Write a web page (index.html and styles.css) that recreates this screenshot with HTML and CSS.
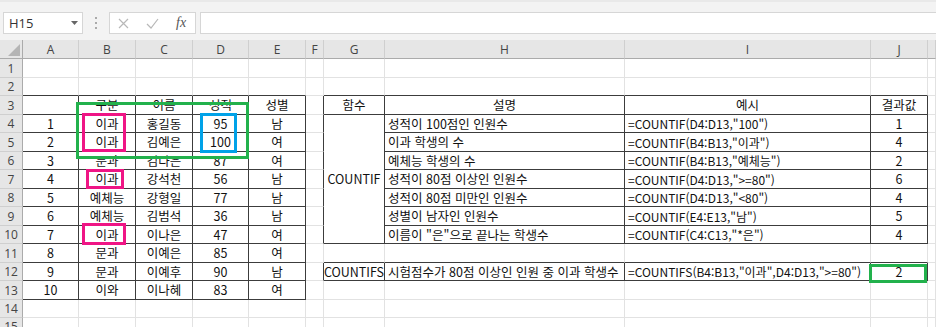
FILE: index.html
```html
<!DOCTYPE html>
<html lang="ko">
<head>
  <meta charset="UTF-8" />
  <title>COUNTIF / COUNTIFS</title>
  <link rel="stylesheet" href="styles.css">
</head>
<body>

  <!-- Formula bar -->
  <div class="toolbar">
    <div class="namebox">
      <span>H15</span>
      <svg class="caret" width="7" height="4" viewBox="0 0 7 4"><path d="M0 0h7L3.5 4z" fill="#666"/></svg>
    </div>
    <svg class="grip" width="3" height="12" viewBox="0 0 3 12">
      <rect x="0" y="0" width="2" height="2" fill="#aaa"/>
      <rect x="0" y="5" width="2" height="2" fill="#aaa"/>
      <rect x="0" y="10" width="2" height="2" fill="#aaa"/>
    </svg>
    <div class="fxbox">
      <svg width="11" height="11" viewBox="0 0 11 11"><path d="M1 1l9 9M10 1l-9 9" stroke="#b8b8b8" stroke-width="1.2" fill="none"/></svg>
      <svg width="13" height="11" viewBox="0 0 13 11"><path d="M1 6l4 4 7-9" stroke="#b8b8b8" stroke-width="1.2" fill="none"/></svg>
      <span class="fx">fx</span>
    </div>
    <div class="formula"></div>
  </div>

  <!-- Sheet -->
  <div class="sheet">
    <!-- column headers -->
    <div class="c corner"><svg width="12" height="12" viewBox="0 0 12 12"><path d="M12 0v12H0z" fill="#b5b5b5"/></svg></div>
    <div class="c hd">A</div><div class="c hd">B</div><div class="c hd">C</div><div class="c hd">D</div><div class="c hd">E</div>
    <div class="c hd">F</div><div class="c hd">G</div><div class="c hd">H</div><div class="c hd">I</div><div class="c hd">J</div><div class="c hd"></div>

    <!-- row 1 -->
    <div class="c rh">1</div>
    <div class="c"></div><div class="c"></div><div class="c"></div><div class="c"></div><div class="c"></div>
    <div class="c"></div><div class="c"></div><div class="c"></div><div class="c"></div><div class="c"></div><div class="c"></div>

    <!-- row 2 -->
    <div class="c rh">2</div>
    <div class="c tb"></div><div class="c tb"></div><div class="c tb"></div><div class="c tb"></div><div class="c tb"></div>
    <div class="c"></div><div class="c tb"></div><div class="c tb"></div><div class="c tb"></div><div class="c tb"></div><div class="c"></div>

    <!-- row 3 -->
    <div class="c rh">3</div>
    <div class="c t"></div><div class="c t">구분</div><div class="c t">이름</div><div class="c t">성적</div><div class="c t">성별</div>
    <div class="c tr"></div><div class="c t">함수</div><div class="c t">설명</div><div class="c t">예시</div><div class="c t">결과값</div><div class="c"></div>

    <!-- row 4 -->
    <div class="c rh">4</div>
    <div class="c t">1</div><div class="c t">이과</div><div class="c t">홍길동</div><div class="c t">95</div><div class="c t">남</div>
    <div class="c tr"></div><div class="c t merged">COUNTIF</div>
    <div class="c t l">성적이 100점인 인원수</div><div class="c t l f">=COUNTIF(D4:D13,"100")</div><div class="c t">1</div><div class="c"></div>

    <!-- row 5 -->
    <div class="c rh">5</div>
    <div class="c t">2</div><div class="c t">이과</div><div class="c t">김예은</div><div class="c t">100</div><div class="c t">여</div>
    <div class="c tr"></div>
    <div class="c t l">이과 학생의 수</div><div class="c t l f">=COUNTIF(B4:B13,"이과")</div><div class="c t">4</div><div class="c"></div>

    <!-- row 6 -->
    <div class="c rh">6</div>
    <div class="c t">3</div><div class="c t">문과</div><div class="c t">김다은</div><div class="c t">87</div><div class="c t">여</div>
    <div class="c tr"></div>
    <div class="c t l">예체능 학생의 수</div><div class="c t l f">=COUNTIF(B4:B13,"예체능")</div><div class="c t">2</div><div class="c"></div>

    <!-- row 7 -->
    <div class="c rh">7</div>
    <div class="c t">4</div><div class="c t">이과</div><div class="c t">강석천</div><div class="c t">56</div><div class="c t">남</div>
    <div class="c tr"></div>
    <div class="c t l">성적이 80점 이상인 인원수</div><div class="c t l f">=COUNTIF(D4:D13,"&gt;=80")</div><div class="c t">6</div><div class="c"></div>

    <!-- row 8 -->
    <div class="c rh">8</div>
    <div class="c t">5</div><div class="c t">예체능</div><div class="c t">강형일</div><div class="c t">77</div><div class="c t">남</div>
    <div class="c tr"></div>
    <div class="c t l">성적이 80점 미만인 인원수</div><div class="c t l f">=COUNTIF(D4:D13,"&lt;80")</div><div class="c t">4</div><div class="c"></div>

    <!-- row 9 -->
    <div class="c rh">9</div>
    <div class="c t">6</div><div class="c t">예체능</div><div class="c t">김범석</div><div class="c t">36</div><div class="c t">남</div>
    <div class="c tr"></div>
    <div class="c t l">성별이 남자인 인원수</div><div class="c t l f">=COUNTIF(E4:E13,"남")</div><div class="c t">5</div><div class="c"></div>

    <!-- row 10 -->
    <div class="c rh">10</div>
    <div class="c t">7</div><div class="c t">이과</div><div class="c t">이나은</div><div class="c t">47</div><div class="c t">여</div>
    <div class="c tr"></div>
    <div class="c t l">이름이 "은"으로 끝나는 학생수</div><div class="c t l f">=COUNTIF(C4:C13,"*은")</div><div class="c t">4</div><div class="c"></div>

    <!-- row 11 -->
    <div class="c rh">11</div>
    <div class="c t">8</div><div class="c t">문과</div><div class="c t">이예은</div><div class="c t">85</div><div class="c t">여</div>
    <div class="c"></div><div class="c tb"></div><div class="c tb"></div><div class="c tb"></div><div class="c tb"></div><div class="c"></div>

    <!-- row 12 -->
    <div class="c rh">12</div>
    <div class="c t">9</div><div class="c t">문과</div><div class="c t">이예후</div><div class="c t">90</div><div class="c t">남</div>
    <div class="c tr"></div><div class="c t">COUNTIFS</div>
    <div class="c t l">시험점수가 80점 이상인 인원 중 이과 학생수</div><div class="c t l f">=COUNTIFS(B4:B13,"이과",D4:D13,"&gt;=80")</div><div class="c t">2</div><div class="c"></div>

    <!-- row 13 -->
    <div class="c rh">13</div>
    <div class="c t">10</div><div class="c t">이와</div><div class="c t">이나혜</div><div class="c t">83</div><div class="c t">여</div>
    <div class="c"></div><div class="c"></div><div class="c"></div><div class="c"></div><div class="c"></div><div class="c"></div>

    <!-- row 14 -->
    <div class="c rh">14</div>
    <div class="c"></div><div class="c"></div><div class="c"></div><div class="c"></div><div class="c"></div>
    <div class="c"></div><div class="c"></div><div class="c"></div><div class="c"></div><div class="c"></div><div class="c"></div>

    <!-- row 15 -->
    <div class="c rh">15</div>
    <div class="c"></div><div class="c"></div><div class="c"></div><div class="c"></div><div class="c"></div>
    <div class="c"></div><div class="c"></div><div class="c"></div><div class="c"></div><div class="c"></div><div class="c"></div>

    <!-- highlight boxes drawn over the cells -->
    <div class="mark green-range"></div>
    <div class="mark pink-1"></div>
    <div class="mark pink-2"></div>
    <div class="mark pink-3"></div>
    <div class="mark blue-score"></div>
    <div class="mark green-result"></div>
  </div>

</body>
</html>
```

FILE: styles.css
```css
body {
  margin: 0;
  width: 936px;
  height: 327px;
  overflow: hidden;
  background: #f3f3f3;
  font-family: "Noto Sans CJK KR", "Noto Sans", sans-serif;
  color: #111;
}

/* formula bar */
.toolbar {
  height: 40px;
  box-sizing: border-box;
  padding: 10px 0 0 3px;
  display: flex;
  align-items: flex-start;
  border-top: 2px solid #e9e9e9;
}

.namebox {
  width: 80px;
  height: 22px;
  box-sizing: border-box;
  background: #fff;
  border: 1px solid #d6d6d6;
  display: flex;
  align-items: center;
  justify-content: space-between;
  padding: 0 4px 0 5px;
  font-family: "Open Sans", sans-serif;
  font-size: 13px;
  color: #333;
}

.grip {
  margin: 5px 11px 0 12px;
}

.fxbox {
  width: 87px;
  height: 22px;
  box-sizing: border-box;
  background: #fff;
  border: 1px solid #d6d6d6;
  display: flex;
  align-items: center;
  gap: 17px;
  padding-left: 8px;
}

.fx {
  font-family: "Liberation Serif", serif;
  font-style: italic;
  font-size: 14px;
  color: #555;
}

.formula {
  flex: 1;
  height: 22px;
  margin-left: 4px;
  box-sizing: border-box;
  background: #fff;
  border: 1px solid #d6d6d6;
  border-right: none;
}

/* sheet grid */
.sheet {
  position: relative;
  display: grid;
  grid-template-columns: 23px 56px 57px 57px 56px 57px 18px 61px 240px 246px 57px 1fr;
  grid-template-rows: 19px 19px 18px 19px 18px 19px 18px 19px 18px 19px 18px 19px 18px 19px 18px 18px;
  background: #fff;
}

.c {
  box-sizing: border-box;
  border-right: 1px solid #e2e2e2;
  border-bottom: 1px solid #e2e2e2;
  display: flex;
  align-items: center;
  justify-content: center;
  white-space: nowrap;
  overflow: hidden;
  font-size: 12.5px;
  line-height: 1;
  padding-top: 1px;
}

.l {
  justify-content: flex-start;
  padding-left: 3px;
}

.f {
  font-size: 12px;
}

.t {
  border-right-color: #3c3c3c;
  border-bottom-color: #3c3c3c;
}

.tb {
  border-bottom-color: #3c3c3c;
}

.tr {
  border-right-color: #3c3c3c;
}

.merged {
  grid-row: span 7;
}

.corner {
  background: #e6e6e6;
  border-right-color: #ababab;
  border-bottom-color: #ababab;
  align-items: flex-end;
  justify-content: flex-end;
  padding: 0 2px 2px 0;
}

.hd {
  background: #e6e6e6;
  border-right-color: #cfcfcf;
  border-bottom-color: #ababab;
  font-family: "Open Sans", sans-serif;
  font-size: 12px;
  color: #444;
}

.rh {
  background: #e6e6e6;
  border-right-color: #ababab;
  border-bottom-color: #cfcfcf;
  font-family: "Open Sans", sans-serif;
  font-size: 12px;
  color: #444;
}

/* highlight boxes */
.mark {
  position: absolute;
  box-sizing: border-box;
  border: 3px solid;
}

.green-range {
  left: 76px;
  top: 62px;
  width: 173px;
  height: 57px;
  border-color: #22b14c;
}

.pink-1 {
  left: 82px;
  top: 73px;
  width: 44px;
  height: 39px;
  border-color: #ef1585;
}

.pink-2 {
  left: 86px;
  top: 129px;
  width: 38px;
  height: 20px;
  border-color: #ef1585;
}

.pink-3 {
  left: 82px;
  top: 183px;
  width: 44px;
  height: 22px;
  border-color: #ef1585;
}

.blue-score {
  left: 200px;
  top: 73px;
  width: 37px;
  height: 40px;
  border-color: #00a2e8;
}

.green-result {
  left: 869px;
  top: 224px;
  width: 58px;
  height: 19px;
  border-color: #22b14c;
}
```
